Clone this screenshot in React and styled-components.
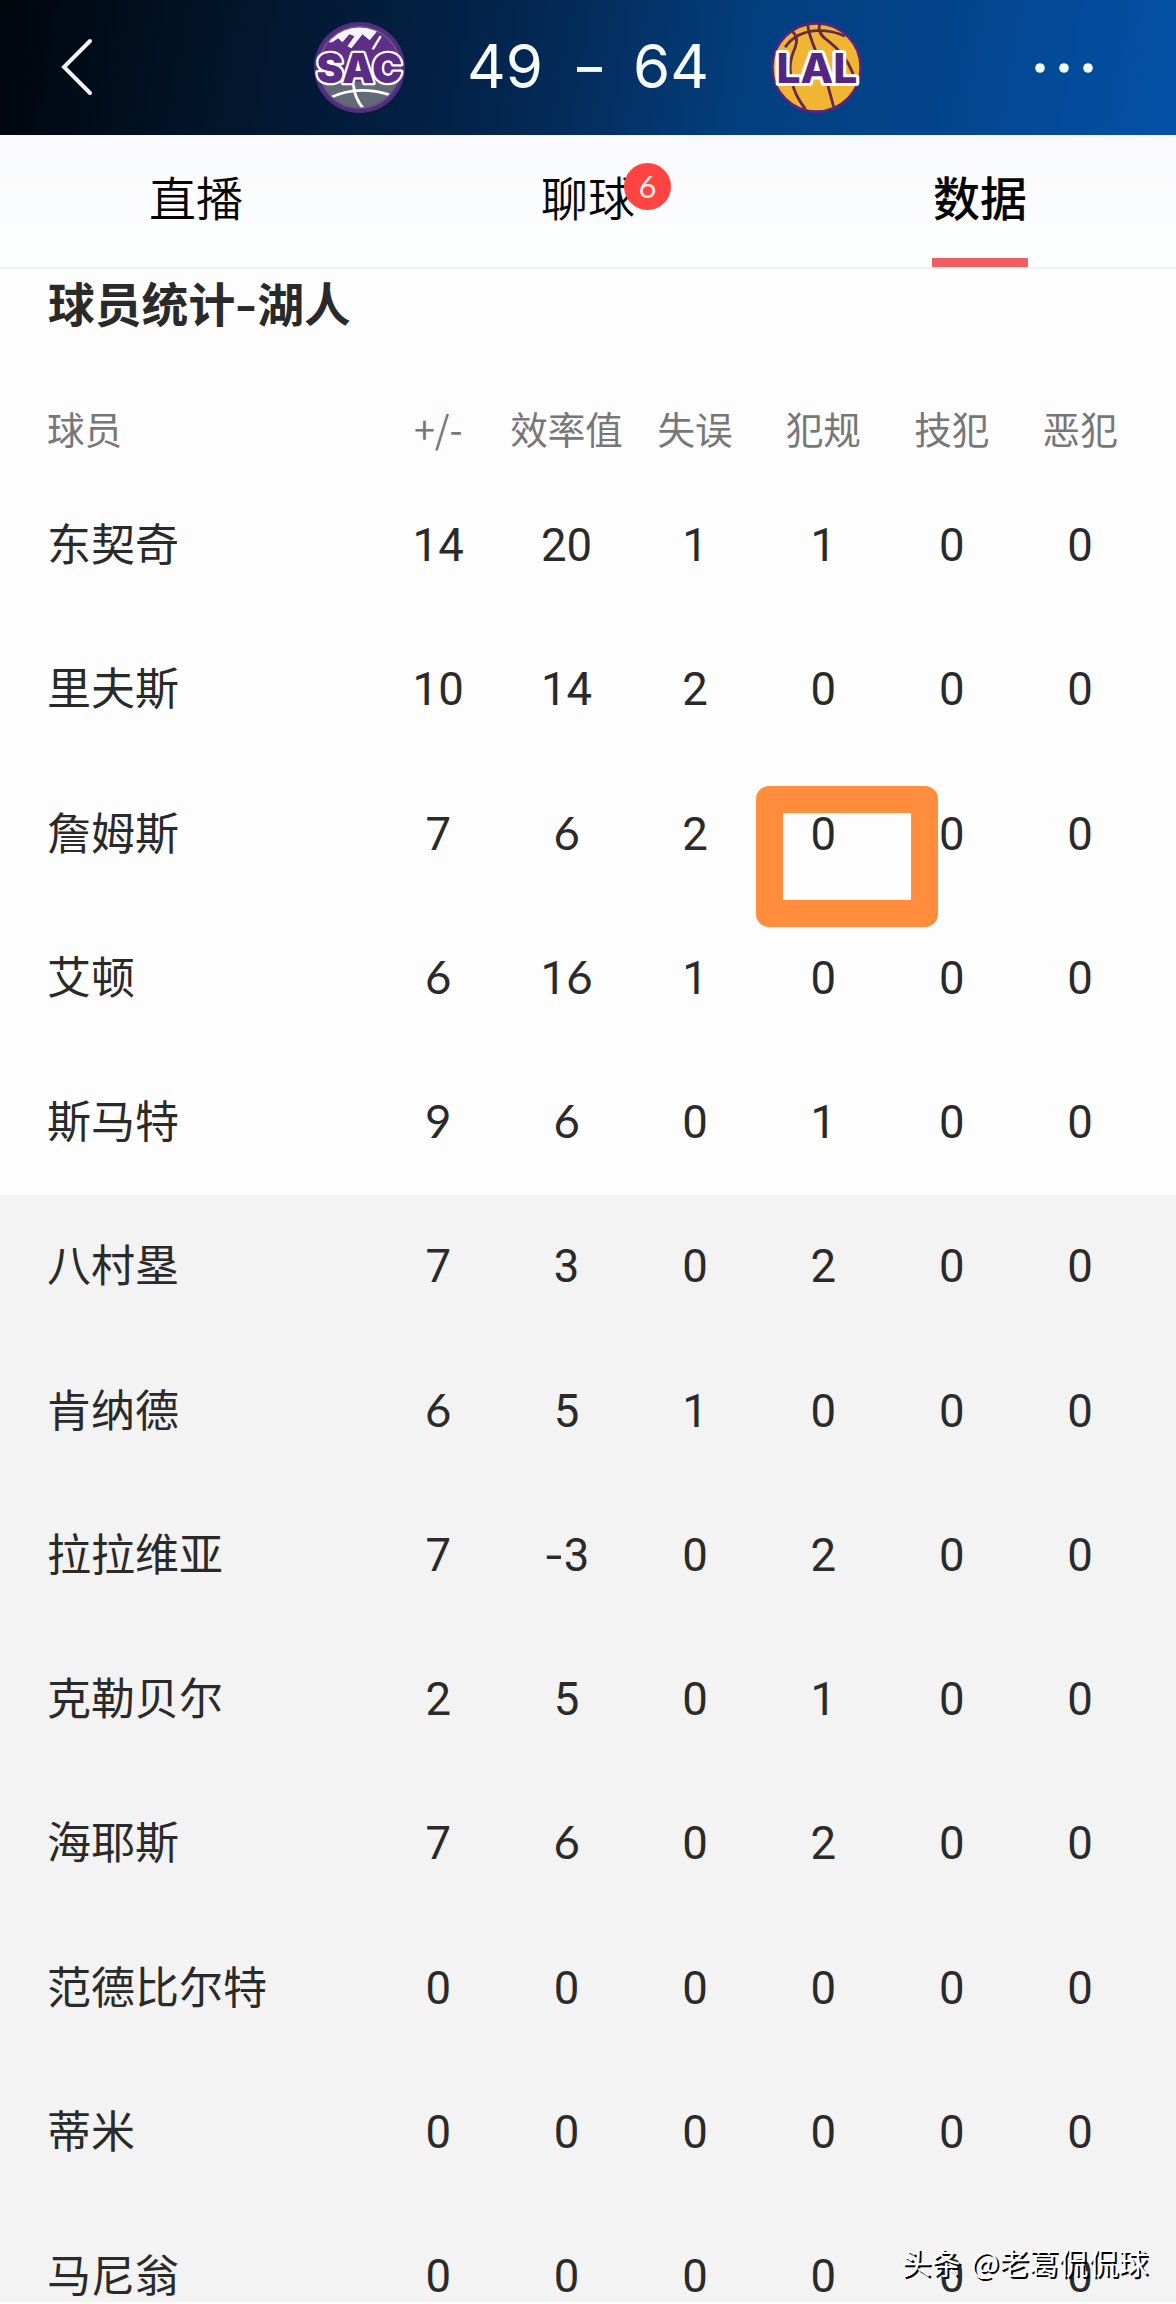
import React from 'react'

import styled, { createGlobalStyle } from 'styled-components'

const GlobalStyle = createGlobalStyle`
    body {
        margin: 0;
        background-color: #fff;
        font-family: "Noto Sans CJK SC", sans-serif;
        color: #2a2a2a;
    }
`

const Page = styled.div`
    position: relative;
    width: 1176px;
    height: 2304px;
    overflow: hidden;
    background: linear-gradient(#fdfdfd 0 1195px, #f3f3f3 1195px 2302px, #fff 2302px);
`

const Header = styled.header`
    display: grid;
    grid-template-columns: 314px 91px 366px 91px 1fr;
    align-items: center;
    height: 135px;
    background: linear-gradient(100deg, #01050c 0%, #021429 18%, #031f42 36%, #032a57 47%, #033f80 64%, #03458c 80%, #0351a8 100%);

    svg {
        display: block;
    }
`

const BackButton = styled.button`
    border: 0;
    padding: 0 0 0 58px;
    background: none;
`

const MoreButton = styled(BackButton)`
    padding: 0 78px 0 0;
    justify-self: end;
`

const Score = styled.div`
    display: flex;
    justify-content: center;
    gap: 33px;
    font-family: Inter, sans-serif;
    font-size: 60px;
    font-weight: 370;
    line-height: 72px;
    color: #f5fbff;
    padding-bottom: 4px;
`

const Dash = styled.span`
    width: 24px;
    text-align: center;
    transform: translateX(-1px) scaleX(1.3);
`

const Tabs = styled.nav`
    display: grid;
    grid-template-columns: repeat(3, 1fr);
    height: 132px;
    border-bottom: 2px solid #f2f2f3;
    background: linear-gradient(#fafafc, #fdfefe);
`

const Tab = styled.div`
    position: relative;
    justify-self: center;
    box-sizing: border-box;
    width: 96px;
    height: 132px;
    padding-top: 27px;
    text-align: center;
    font-size: 47px;
    line-height: 68px;
    white-space: nowrap;
    color: #050505;
    font-weight: ${props => props.$active ? 500 : 350};
    border-bottom: 9px solid ${props => props.$active ? '#f05e61' : 'transparent'};
`

const Badge = styled.span`
    position: absolute;
    left: 84px;
    top: 28px;
    width: 47px;
    height: 47px;
    border-radius: 50%;
    background-color: #ff4442;
    color: #ffe9e6;
    font-family: Lato, sans-serif;
    font-size: 31px;
    font-weight: 400;
    line-height: 46px;
`

const Title = styled.h2`
    margin: 0;
    padding-left: 48px;
    height: 78px;
    font-size: 46.8px;
    line-height: 66px;
    font-weight: 700;
`

const Minus = styled.span`
    display: inline-block;
    width: ${props => props.$width}px;
    text-align: center;
    transform: scaleX(1.3);
`

const Row = styled.div`
    display: grid;
    grid-template-columns: 374px repeat(6, 128.4px);
    align-items: center;
    height: 144.25px;
    font-size: 44px;
    line-height: 64px;
    white-space: nowrap;
`

const HeadRow = styled(Row)`
    box-sizing: border-box;
    height: 123px;
    padding-top: 39px;
    font-size: 37.6px;
    color: #777;
`

const Name = styled.div`
    padding-left: 47px;
`

const Label = styled.div`
    text-align: center;
`

const Cell = styled.div`
    position: relative;
    padding-top: 8px;
    text-align: center;
    font-family: Roboto, sans-serif;
    font-size: 45.5px;
`

const Round = styled.span`
    font-family: Lato, sans-serif;
    line-height: 1;
`

const Mark = styled.div`
    position: absolute;
    left: -3.5px;
    top: -9px;
    box-sizing: border-box;
    width: 182px;
    height: 141px;
    border: 27px solid #ff8d3b;
    border-radius: 13px;
`

const Watermark = styled.div`
    position: absolute;
    right: 28px;
    bottom: 21px;
    font-size: 29.8px;
    line-height: 44px;
    word-spacing: 3px;
    color: #fff;
    text-shadow: 2px 2px 0 #000;
`

const columns = ['+/-', '效率值', '失误', '犯规', '技犯', '恶犯']

const players = [
    { name: '东契奇', stats: [14, 20, 1, 1, 0, 0] },
    { name: '里夫斯', stats: [10, 14, 2, 0, 0, 0] },
    { name: '詹姆斯', stats: [7, 6, 2, 0, 0, 0], marked: 3 },
    { name: '艾顿', stats: [6, 16, 1, 0, 0, 0] },
    { name: '斯马特', stats: [9, 6, 0, 1, 0, 0] },
    { name: '八村塁', stats: [7, 3, 0, 2, 0, 0] },
    { name: '肯纳德', stats: [6, 5, 1, 0, 0, 0] },
    { name: '拉拉维亚', stats: [7, -3, 0, 2, 0, 0] },
    { name: '克勒贝尔', stats: [2, 5, 0, 1, 0, 0] },
    { name: '海耶斯', stats: [7, 6, 0, 2, 0, 0] },
    { name: '范德比尔特', stats: [0, 0, 0, 0, 0, 0] },
    { name: '蒂米', stats: [0, 0, 0, 0, 0, 0] },
    { name: '马尼翁', stats: [0, 0, 0, 0, 0, 0] },
]

// 6 and 9 are set in Lato for their straight stems
const Digits = ({ value }) => String(value).split('').map((char, i) => {
    if (char === '-') return <Minus key={i} $width={20}>-</Minus>
    if (char === '6' || char === '9') return <Round key={i}>{char}</Round>
    return char
})

const SacLogo = () => (
    <svg width="91" height="91" viewBox="0 0 90 90">
        <clipPath id="sac"><circle cx="45" cy="45" r="39.5" /></clipPath>
        <circle cx="45" cy="45" r="45" fill="#522d80" />
        <circle cx="45" cy="45" r="41" fill="#6b5a86" />
        <g clipPath="url(#sac)">
            <rect width="90" height="90" fill="#5f2e86" />
            <path d="M14 20 L20 5 H66 L61 11 L55 18 L48 12 L37 26 L33 24 L40 14 L35 12 L28 20 L24 16 L18 20Z" fill="#f8f4fc" />
            <path d="M66 14 L58 27" stroke="#f8f4fc" strokeWidth="2.5" />
            <rect y="59" width="90" height="31" fill="#626b75" />
            <path d="M16 75 Q42 62 75 72 M39 62 Q40 76 50 87" fill="none" stroke="#fff" strokeWidth="2.8" />
        </g>
        <text x="45" y="60" textAnchor="middle" textLength="85" lengthAdjust="spacingAndGlyphs" fontFamily="Inter, sans-serif" fontWeight="900" fontSize="41" fill="#5b2b86" stroke="#fff" strokeWidth="4.6" strokeLinejoin="round" paintOrder="stroke">SAC</text>
    </svg>
)

const LalLogo = () => (
    <svg width="91" height="91" viewBox="0 0 90 90">
        <circle cx="45" cy="45" r="43.7" fill="#f0b532" stroke="#552583" strokeWidth="2.6" />
        <g fill="none" stroke="#642a48" strokeWidth="2.8">
            <path d="M14 25 Q24 10 45 8.5 Q61 8 73 14" />
            <path d="M20 8 Q28 15 24 25 Q19 36 19 45 Q19 67 34 86" />
            <path d="M36 2 Q38 14 44 28 M56 62 L62 84" />
            <path d="M48 2 Q46 10 53 16 Q75 32 82 54" />
        </g>
        <text x="45.5" y="60" textAnchor="middle" textLength="80" lengthAdjust="spacingAndGlyphs" fontFamily="Inter, sans-serif" fontWeight="800" fontSize="40" fill="#552583" stroke="#fff" strokeWidth="6" strokeLinejoin="round" paintOrder="stroke">LAL</text>
    </svg>
)

const App = () => (
    <>
        <GlobalStyle />
        <Page>
            <Header>
                <BackButton>
                    <svg width="38" height="64" viewBox="0 0 38 64" fill="none" stroke="#f4f4f6" strokeWidth="4" strokeLinecap="round">
                        <path d="M32 5 L6 31 L32 57" />
                    </svg>
                </BackButton>
                <SacLogo />
                <Score>
                    <span>49</span>
                    <Dash>-</Dash>
                    <span>64</span>
                </Score>
                <LalLogo />
                <MoreButton>
                    <svg width="64" height="12" viewBox="0 0 64 12" fill="#f0faff">
                        <circle cx="6" cy="6" r="4.8" />
                        <circle cx="30" cy="6" r="4.8" />
                        <circle cx="54" cy="6" r="4.8" />
                    </svg>
                </MoreButton>
            </Header>
            <Tabs>
                <Tab>直播</Tab>
                <Tab>聊球<Badge>6</Badge></Tab>
                <Tab $active>数据</Tab>
            </Tabs>
            <Title>球员统计<Minus $width={22}>-</Minus>湖人</Title>
            <HeadRow>
                <Name>球员</Name>
                {columns.map(column => <Label key={column}>{column}</Label>)}
            </HeadRow>
            {players.map(({ name, stats, marked }) => (
                <Row key={name}>
                    <Name>{name}</Name>
                    {stats.map((value, i) => (
                        <Cell key={i}>
                            <Digits value={value} />
                            {marked === i && <Mark />}
                        </Cell>
                    ))}
                </Row>
            ))}
            <Watermark>头条 @老葛侃侃球</Watermark>
        </Page>
    </>
)

export default App
